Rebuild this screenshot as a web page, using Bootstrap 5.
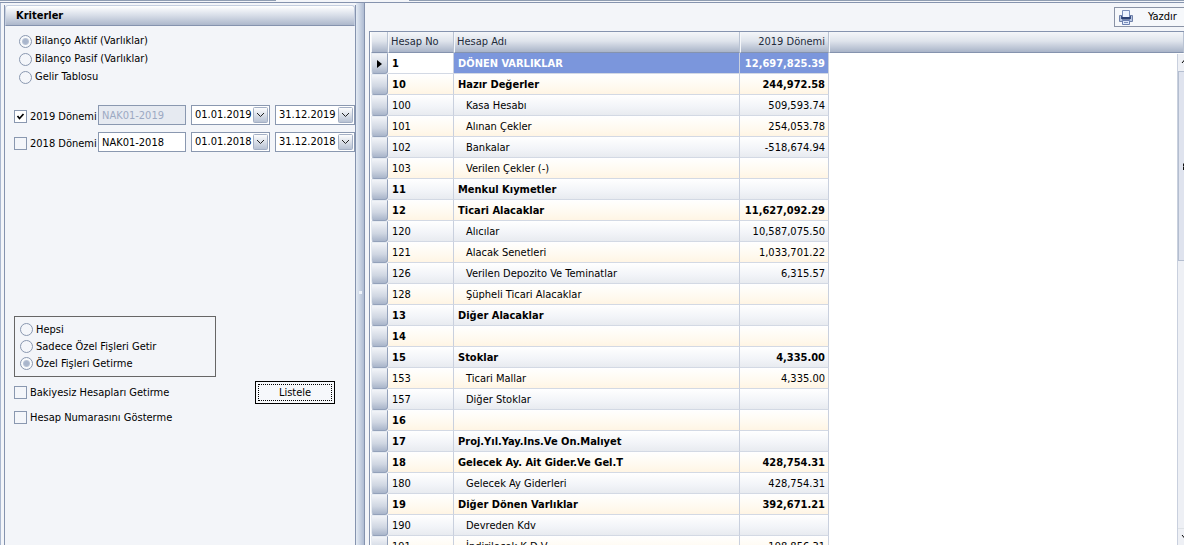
<!DOCTYPE html>
<html lang="tr">
<head>
<meta charset="utf-8">
<meta name="viewport" content="width=device-width, initial-scale=1">
<title>Bilanço</title>
<link href="https://cdn.jsdelivr.net/npm/bootstrap@5.3.0/dist/css/bootstrap.min.css" rel="stylesheet">
<style>
  :root { --line: #8593ae; --soft: #c9d0de; --face: #f3f5f9; }
  body { font: 11px/14px "DejaVu Sans Condensed", "DejaVu Sans", sans-serif; color: #000; background: #fff; overflow: hidden; }
  .screen { height: calc(100vh - 6px); background: var(--face); overflow: hidden; }
  .body-row, .sheet { min-height: 0; }
  .main { min-width: 0; }
  .topline { height: 3px; flex: none; border-bottom: 1px solid var(--line); }
  .topline span { height: 1px; background: #8f9db2; }
  .side { width: 356px; flex: none; border-left: 1px solid #a9b7cf; padding: 2px 0 0 3px; }
  .criteria { border: 1px solid var(--line); border-width: 0 1px; overflow: hidden; }
  .criteria form { padding: 6px 0 0 9px; }
  .panel-title { height: 21px; padding: 2px 10px; font-size: 11px; font-weight: 700; line-height: 15px; background: linear-gradient(#fff, #dfe4ed 40%, #adb8cc); border: 1px solid #c5cfe0; border-bottom-color: var(--line); border-radius: 3px 3px 0 0; }
  .form-check-input { width: 13px; height: 13px; margin: 0; flex: none; border: 1px solid #8a98b0; background-color: #f4f6fa; box-shadow: none; }
  .form-check-input[type=checkbox] { border-radius: 0; }
  .form-check-input:checked { background-color: #fff; border-color: #8a98b0; }
  .form-check-input[type=checkbox]:checked { background-image: url("data:image/svg+xml,%3csvg xmlns='http://www.w3.org/2000/svg' viewBox='0 0 11 11'%3e%3cpath fill='none' stroke='%23000' stroke-width='1.700' d='M2.500 5l2 2.500 4-4.500'/%3e%3c/svg%3e"); }
  .form-check-input[type=radio]:checked { background: radial-gradient(circle, #a9b6cc 0 2px, #b9c4d6 3px, #f8fafc 4px); }
  .pick { display: flex; align-items: center; gap: 3px; height: 18px; white-space: nowrap; }
  .views { padding-left: 5px; margin-bottom: 19px; }
  .period { display: grid; grid-template-columns: 79px 88px 79px 80px; column-gap: 5px; height: 20px; margin-bottom: 7px; }
  .period .pick { height: 23px; }
  .field { width: 100%; height: 20px; border: 1px solid #8a98b0; border-radius: 0; padding: 0 3px; font: inherit; background: #fff; color: #000; }
  .field:disabled { background: #e6eaf1; color: #9ca9c3; }
  select.field { appearance: none; background: #fff url("data:image/svg+xml,%3csvg xmlns='http://www.w3.org/2000/svg' viewBox='0 0 15 16'%3e%3cdefs%3e%3clinearGradient id='g' x2='0' y2='1'%3e%3cstop stop-color='%23fff'/%3e%3cstop offset='1' stop-color='%23b5c0d2'/%3e%3c/linearGradient%3e%3c/defs%3e%3crect x='.5' y='.5' width='14' height='15' rx='1' fill='url(%23g)' stroke='%23a3afc4'/%3e%3cpath fill='none' stroke='%23222' d='M4 6l3.500 3.500L11 6'/%3e%3c/svg%3e") no-repeat right 1px center / 15px 16px; }
  .slips { width: 202px; height: 61px; border: 1px solid #666; padding: 4px 5px; margin-top: 164px; margin-bottom: 3px; }
  .slips .pick { height: 17px; }
  .options { height: 25px; padding-right: 20px; }
  .list-btn { width: 80px; height: 23px; padding: 2px; border: 1px solid #000; border-radius: 0; font: inherit; color: #000; background: #f6f8fb; }
  .list-btn span { display: block; border: 1px dotted #000; line-height: 15px; }
  .splitter { width: 9px; flex: none; background: linear-gradient(90deg, #e4ebf4, #aebbd2); border-right: 1px solid var(--line); }
  .splitter i { width: 3px; height: 3px; background: #eef3fa; margin-top: 36px; }
  .tools { height: 28px; flex: none; padding-top: 4px; }
  .print-btn { width: 70px; height: 20px; gap: 15px; padding: 0 0 0 4px; border: 1px solid #8a93a6; border-right: 0; border-radius: 0; font: inherit; color: #000; background: #f6f8fb; }
  .sheet { margin-left: 4px; border: 1px solid var(--line); border-width: 1px 0 0 1px; background: #fff; overflow: hidden; padding-left: 1px; }
  .ledger { width: 100%; table-layout: fixed; border-collapse: separate; border-spacing: 0; }
  .ledger th, .ledger td { height: 21px; padding: 0 3px 0 4px; line-height: 20px; white-space: nowrap; border-right: 1px solid var(--soft); border-bottom: 1px solid #d3d9e4; }
  .ledger td { padding-top: 2px; line-height: 18px; }
  .ledger th { font-weight: 400; color: #222b3a; background: linear-gradient(#f4f6f9, #dfe4ec 45%, #a9b4c8); border-right-color: #b9c3d3; border-bottom-color: var(--line); border-left: 1px solid #f5f7fa; padding-left: 2px; }
  .c-mark { width: 17px; } .c-no { width: 66px; } .c-name { width: 286px; } .c-sum { width: 89px; }
  .ledger tr td { background: linear-gradient(#fff, #fffaf0 60%, #fff5e4); }
  .ledger tr:nth-child(odd) td { background: linear-gradient(#fff, #f2f4f8 60%, #e8ebf0); }
  .ledger .total td { font-weight: 700; }
  .ledger .detail td:nth-child(3) { padding-left: 12px; }
  .ledger tbody tr.current td { background: #7b96dc; color: #fff; }
  .ledger tbody tr.current td:nth-child(2) { background: #fff; color: #000; }
  .ledger tbody tr:nth-child(n) td:first-child { background: linear-gradient(#f2f4f8, #cfd6e2 60%, #a9b5ca); border: 1px solid #e6ebf2; border-right-color: #93a1ba; border-bottom-color: #93a1ba; border-radius: 0 0 3px 3px; padding: 0; }
  .ledger tbody tr:nth-child(n) td:last-child { background: #fff; border: 0; }
  .ledger svg { display: block; margin: auto; }
  .vbar { width: 7px; right: 0; top: 22px; bottom: 0; border-left: 1px solid var(--soft); background: #eef0f5; overflow: hidden; }
  .vbar svg { display: block; margin-left: 3px; }
  .vstep { height: 17px; flex: none; padding-top: 5px; }
  .thumb { height: 190px; border: 1px solid #b4bed0; border-right: 0; background: #dfe3ee; padding-top: 91px; }
</style>
</head>
<body>
<div class="screen d-flex flex-column">
  <div class="topline d-flex"><span style="width:276px"></span><span class="flex-grow-1" style="margin-left:133px"></span></div>
  <div class="body-row d-flex flex-grow-1">
    <aside class="side">
      <div class="criteria h-100">
        <h1 class="panel-title mb-0">Kriterler</h1>
        <form>
          <div class="views">
            <label class="pick"><input class="form-check-input" type="radio" name="view" checked>Bilanço Aktif (Varlıklar)</label>
            <label class="pick"><input class="form-check-input" type="radio" name="view">Bilanço Pasif (Varlıklar)</label>
            <label class="pick"><input class="form-check-input" type="radio" name="view">Gelir Tablosu</label>
          </div>
          <div class="period">
            <label class="pick"><input class="form-check-input" type="checkbox" checked>2019 Dönemi</label>
            <input class="field" type="text" value="NAK01-2019" aria-label="2019 veritabanı" disabled>
            <select class="field" aria-label="2019 başlangıç"><option>01.01.2019</option></select>
            <select class="field" aria-label="2019 bitiş"><option>31.12.2019</option></select>
          </div>
          <div class="period mb-0">
            <label class="pick"><input class="form-check-input" type="checkbox">2018 Dönemi</label>
            <input class="field" type="text" value="NAK01-2018" aria-label="2018 veritabanı">
            <select class="field" aria-label="2018 başlangıç"><option>01.01.2018</option></select>
            <select class="field" aria-label="2018 bitiş"><option>31.12.2018</option></select>
          </div>
          <div class="slips">
            <label class="pick"><input class="form-check-input" type="radio" name="slip">Hepsi</label>
            <label class="pick"><input class="form-check-input" type="radio" name="slip">Sadece Özel Fişleri Getir</label>
            <label class="pick"><input class="form-check-input" type="radio" name="slip" checked>Özel Fişleri Getirme</label>
          </div>
          <div class="options d-flex align-items-center justify-content-between">
            <label class="pick"><input class="form-check-input" type="checkbox">Bakiyesiz Hesapları Getirme</label>
            <button type="button" class="btn list-btn"><span>Listele</span></button>
          </div>
          <div class="options d-flex align-items-center">
            <label class="pick"><input class="form-check-input" type="checkbox">Hesap Numarasını Gösterme</label>
          </div>
        </form>
      </div>
    </aside>
    <div class="splitter d-flex align-items-center justify-content-center"><i></i></div>
    <main class="main flex-grow-1 d-flex flex-column">
      <div class="tools d-flex justify-content-end">
        <button type="button" class="btn print-btn d-flex align-items-center">
          <svg width="14" height="15" viewBox="0 0 14 15"><path d="M.500 5.500h13v6H.500z" fill="#b9c6e0" stroke="#7082aa"/><path d="M2 6h10v3H2z" fill="#3c5286"/><path d="M3.500.500h7v7h-7z" fill="#eef4ff" stroke="#7d90bb"/><path d="M3 7h8v2.500H3z" fill="#2d4274"/><path d="M3.500 10.500h7v4h-7z" fill="#dfe9fa" stroke="#6c80b0"/><path d="M5 12.500h4" stroke="#7d90bb"/></svg>
          <span>Yazdır</span>
        </button>
      </div>
      <div class="sheet flex-grow-1 position-relative">
        <table class="ledger">
          <colgroup><col class="c-mark"><col class="c-no"><col class="c-name"><col class="c-sum"><col></colgroup>
          <thead><tr><th></th><th>Hesap No</th><th>Hesap Adı</th><th class="text-end">2019 Dönemi</th><th></th></tr></thead>
          <tbody>
            <tr class="total current"><td><svg width="5" height="8" viewBox="0 0 5 8"><path d="M0 0l5 4-5 4z"/></svg></td><td>1</td><td>DÖNEN VARLIKLAR</td><td class="text-end">12,697,825.39</td><td></td></tr>
            <tr class="total"><td></td><td>10</td><td>Hazır Değerler</td><td class="text-end">244,972.58</td><td></td></tr>
            <tr class="detail"><td></td><td>100</td><td>Kasa Hesabı</td><td class="text-end">509,593.74</td><td></td></tr>
            <tr class="detail"><td></td><td>101</td><td>Alınan Çekler</td><td class="text-end">254,053.78</td><td></td></tr>
            <tr class="detail"><td></td><td>102</td><td>Bankalar</td><td class="text-end">-518,674.94</td><td></td></tr>
            <tr class="detail"><td></td><td>103</td><td>Verilen Çekler (-)</td><td></td><td></td></tr>
            <tr class="total"><td></td><td>11</td><td>Menkul Kıymetler</td><td></td><td></td></tr>
            <tr class="total"><td></td><td>12</td><td>Ticari Alacaklar</td><td class="text-end">11,627,092.29</td><td></td></tr>
            <tr class="detail"><td></td><td>120</td><td>Alıcılar</td><td class="text-end">10,587,075.50</td><td></td></tr>
            <tr class="detail"><td></td><td>121</td><td>Alacak Senetleri</td><td class="text-end">1,033,701.22</td><td></td></tr>
            <tr class="detail"><td></td><td>126</td><td>Verilen Depozito Ve Teminatlar</td><td class="text-end">6,315.57</td><td></td></tr>
            <tr class="detail"><td></td><td>128</td><td>Şüpheli Ticari Alacaklar</td><td></td><td></td></tr>
            <tr class="total"><td></td><td>13</td><td>Diğer Alacaklar</td><td></td><td></td></tr>
            <tr class="total"><td></td><td>14</td><td></td><td></td><td></td></tr>
            <tr class="total"><td></td><td>15</td><td>Stoklar</td><td class="text-end">4,335.00</td><td></td></tr>
            <tr class="detail"><td></td><td>153</td><td>Ticari Mallar</td><td class="text-end">4,335.00</td><td></td></tr>
            <tr class="detail"><td></td><td>157</td><td>Diğer Stoklar</td><td></td><td></td></tr>
            <tr class="total"><td></td><td>16</td><td></td><td></td><td></td></tr>
            <tr class="total"><td></td><td>17</td><td>Proj.Yıl.Yay.Ins.Ve On.Malıyet</td><td></td><td></td></tr>
            <tr class="total"><td></td><td>18</td><td>Gelecek Ay. Ait Gider.Ve Gel.T</td><td class="text-end">428,754.31</td><td></td></tr>
            <tr class="detail"><td></td><td>180</td><td>Gelecek Ay Giderleri</td><td class="text-end">428,754.31</td><td></td></tr>
            <tr class="total"><td></td><td>19</td><td>Diğer Dönen Varlıklar</td><td class="text-end">392,671.21</td><td></td></tr>
            <tr class="detail"><td></td><td>190</td><td>Devreden Kdv</td><td></td><td></td></tr>
            <tr class="detail"><td></td><td>191</td><td>İndirilecek K.D.V</td><td class="text-end">198,856.31</td><td></td></tr>
          </tbody>
        </table>
        <div class="vbar position-absolute d-flex flex-column">
          <div class="vstep"><svg width="7" height="5" viewBox="0 0 7 5"><path d="M1 4l2.500-3L6 4" fill="none" stroke="#000"/></svg></div>
          <div class="thumb"><svg width="7" height="7" viewBox="0 0 7 7"><path d="M1 1h6M1 4h6M1.500 1v2M1.500 4v3" fill="none" stroke="#111"/></svg></div>
          <div class="vstep mt-auto border-top"><svg width="7" height="5" viewBox="0 0 7 5"><path d="M1 1l2.500 3L6 1" fill="none" stroke="#000"/></svg></div>
        </div>
      </div>
    </main>
  </div>
</div>
<script src="https://cdn.jsdelivr.net/npm/bootstrap@5.3.0/dist/js/bootstrap.bundle.min.js"></script>
</body>
</html>
